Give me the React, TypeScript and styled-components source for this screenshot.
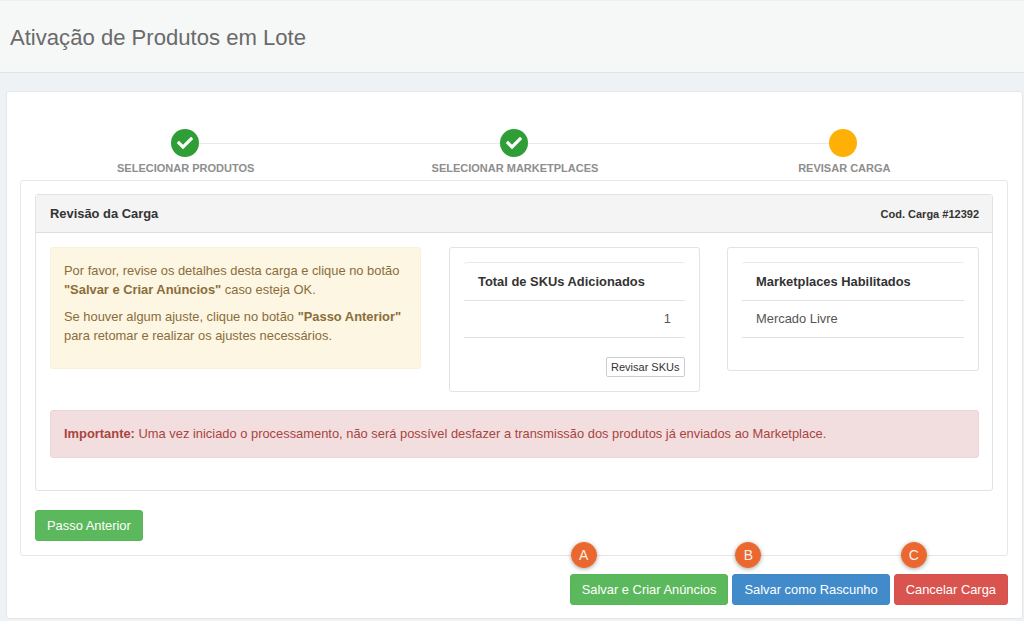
import React from 'react';
import styled, { createGlobalStyle } from 'styled-components';
import { FaCheck } from 'react-icons/fa';

const GlobalStyle = createGlobalStyle`
  html, body {
    margin: 0;
    padding: 0;
    background: #eef2f4;
    font-family: "Liberation Sans", Arial, sans-serif;
    font-size: 13px;
    color: #676a6c;
  }
  * {
    box-sizing: border-box;
  }
`;

const PageHeader = styled.header`
  height: 73px;
  background: #f6f8f8;
  border-top: 1px solid #eef1f1;
  border-bottom: 1px solid #dfe5e8;
  padding: 3px 10px 0;
  display: flex;
  align-items: center;
`;

const PageTitle = styled.h1`
  margin: 0;
  font-size: 22.1px;
  font-weight: 400;
  color: #6a6a6a;
`;

const Main = styled.main`
  padding: 18px 1px 0 6px;
`;

const Card = styled.section`
  height: 528px;
  background: #fff;
  border: 1px solid #e4e7e9;
  border-radius: 3px;
  padding: 37px 14px 14px 13px;
`;

const Stepper = styled.ol`
  list-style: none;
  margin: 0;
  padding: 0;
  height: 51px;
  display: grid;
  grid-template-columns: repeat(3, 1fr);
`;

const Step = styled.li<{ $first?: boolean; $last?: boolean }>`
  position: relative;
  display: flex;
  flex-direction: column;
  align-items: center;

  &::before {
    content: '';
    position: absolute;
    top: 14px;
    height: 1px;
    left: ${props => (props.$first ? '50%' : '0')};
    right: ${props => (props.$last ? '50%' : '0')};
    background: #e9e9e9;
  }
`;

const StepDot = styled.span<{ $color: string }>`
  position: relative;
  width: 28px;
  height: 28px;
  border-radius: 50%;
  background: ${props => props.$color};
  color: #fff;
  display: flex;
  align-items: center;
  justify-content: center;
`;

const StepLabel = styled.span`
  margin-top: 4px;
  padding-left: 2px;
  font-size: 11px;
  line-height: 14px;
  font-weight: 700;
  color: #8e8e8e;
  text-transform: uppercase;
`;

const StepPanel = styled.div`
  height: 376px;
  border: 1px solid #e6e6e6;
  border-radius: 3px;
  padding: 13px 14px 0;
`;

const ReviewPanel = styled.div`
  height: 297px;
  border: 1px solid #e3e3e3;
  border-radius: 3px;
`;

const ReviewHeader = styled.div`
  height: 38px;
  background: #f4f4f4;
  border-bottom: 1px solid #ddd;
  padding: 0 13px 0 14px;
  display: flex;
  align-items: center;
  justify-content: space-between;
`;

const ReviewTitle = styled.h3`
  margin: 0;
  font-size: 12.9px;
  font-weight: 700;
  color: #333;
`;

const LoadCode = styled.span`
  font-size: 11px;
  font-weight: 700;
  color: #333;
`;

const ReviewBody = styled.div`
  padding: 14px 13px 0 14px;
`;

const Columns = styled.div`
  display: grid;
  grid-template-columns: 372px 251px 252px;
  justify-content: space-between;
  align-items: start;
  height: 163px;
`;

const Alert = styled.div<{ $tone: 'warning' | 'danger' }>`
  border-radius: 3px;
  border: 1px solid ${props => (props.$tone === 'warning' ? '#faf0d8' : '#ecd5d8')};
  background: ${props => (props.$tone === 'warning' ? '#fcf6e2' : '#f2dede')};
  color: ${props => (props.$tone === 'warning' ? '#8a6d3b' : '#a94442')};
  font-size: 12.9px;
  line-height: 18.5px;
`;

const NoticeAlert = styled(Alert)`
  width: 371px;
  height: 122px;
  padding: 14px 13px;
`;

const WideAlert = styled(Alert)`
  height: 48px;
  padding: 0 13px;
  display: flex;
  align-items: center;
`;

const AlertParagraph = styled.p`
  margin: 0 0 9px;
`;

const InnerCard = styled.div<{ $bottom: number }>`
  border: 1px solid #e3e3e3;
  border-radius: 3px;
  padding: 14px 14px ${props => props.$bottom}px;
`;

const MiniTable = styled.div`
  border-top: 1px solid #e9e9e9;
  border-radius: 3px 3px 0 0;
`;

const MiniHeading = styled.div`
  height: 38px;
  padding: 0 14px;
  display: flex;
  align-items: center;
  font-size: 12.9px;
  font-weight: 700;
  color: #333;
  border-bottom: 1px solid #e3e3e3;
`;

const MiniCell = styled.div<{ $right?: boolean }>`
  height: 37px;
  padding: 0 14px 2px;
  display: flex;
  align-items: center;
  justify-content: ${props => (props.$right ? 'flex-end' : 'flex-start')};
  font-size: 12.9px;
  color: #555;
  border-bottom: 1px solid #e3e3e3;
`;

const ReviseRow = styled.div`
  display: flex;
  justify-content: flex-end;
  margin-top: 19px;
`;

const ReviseButton = styled.button`
  height: 20px;
  padding: 0 4.5px;
  border: 1px solid #ccc;
  border-radius: 2px;
  background: #fff;
  font-family: inherit;
  font-size: 11px;
  color: #333;
`;

const ActionButton = styled.button<{ $color: string; $edge: string }>`
  height: 31px;
  padding: 0 11px;
  border: 1px solid ${props => props.$edge};
  border-radius: 3px;
  background: ${props => props.$color};
  color: #fff;
  font-family: inherit;
  font-size: 12.9px;
  white-space: nowrap;
`;

const BackRow = styled.div`
  margin-top: 19px;
`;

const Footer = styled.div`
  margin-top: 18px;
  display: flex;
  justify-content: flex-end;
  gap: 4px;
`;

const ButtonSlot = styled.div`
  position: relative;
`;

const Marker = styled.span<{ $left: number }>`
  position: absolute;
  top: -32px;
  left: ${props => props.$left}px;
  width: 26px;
  height: 26px;
  border-radius: 50%;
  background: #ea6830;
  border: 1px solid #f06a28;
  box-shadow: 0 1px 4px rgba(0, 0, 0, 0.35);
  color: #fdeee6;
  font-size: 14px;
  display: flex;
  align-items: center;
  justify-content: center;
`;

const steps = [
  { label: 'Selecionar Produtos', color: '#2f9e36', done: true },
  { label: 'Selecionar Marketplaces', color: '#2f9e36', done: true },
  { label: 'Revisar Carga', color: '#ffb007', done: false },
];

const actions = [
  { label: 'Salvar e Criar Anúncios', color: '#5cb85c', edge: '#58b658', marker: 'A', left: 1 },
  { label: 'Salvar como Rascunho', color: '#428bca', edge: '#4288c6', marker: 'B', left: 3 },
  { label: 'Cancelar Carga', color: '#d9534f', edge: '#d6504c', marker: 'C', left: 7 },
];

const App: React.FC = () => (
  <>
    <GlobalStyle />
    <PageHeader>
      <PageTitle>Ativação de Produtos em Lote</PageTitle>
    </PageHeader>
    <Main>
      <Card>
        <Stepper>
          {steps.map((step, index) => (
            <Step key={step.label} $first={index === 0} $last={index === steps.length - 1}>
              <StepDot $color={step.color}>{step.done && <FaCheck size={16} />}</StepDot>
              <StepLabel>{step.label}</StepLabel>
            </Step>
          ))}
        </Stepper>
        <StepPanel>
          <ReviewPanel>
            <ReviewHeader>
              <ReviewTitle>Revisão da Carga</ReviewTitle>
              <LoadCode>Cod. Carga #12392</LoadCode>
            </ReviewHeader>
            <ReviewBody>
              <Columns>
                <NoticeAlert $tone="warning">
                  <AlertParagraph>
                    Por favor, revise os detalhes desta carga e clique no botão{' '}
                    <strong>"Salvar e Criar Anúncios"</strong> caso esteja OK.
                  </AlertParagraph>
                  <AlertParagraph>
                    Se houver algum ajuste, clique no botão <strong>"Passo Anterior"</strong> para
                    retomar e realizar os ajustes necessários.
                  </AlertParagraph>
                </NoticeAlert>
                <InnerCard $bottom={14}>
                  <MiniTable>
                    <MiniHeading>Total de SKUs Adicionados</MiniHeading>
                    <MiniCell $right>1</MiniCell>
                  </MiniTable>
                  <ReviseRow>
                    <ReviseButton>Revisar SKUs</ReviseButton>
                  </ReviseRow>
                </InnerCard>
                <InnerCard $bottom={32}>
                  <MiniTable>
                    <MiniHeading>Marketplaces Habilitados</MiniHeading>
                    <MiniCell>Mercado Livre</MiniCell>
                  </MiniTable>
                </InnerCard>
              </Columns>
              <WideAlert $tone="danger">
                <span>
                  <strong>Importante:</strong> Uma vez iniciado o processamento, não será possível
                  desfazer a transmissão dos produtos já enviados ao Marketplace.
                </span>
              </WideAlert>
            </ReviewBody>
          </ReviewPanel>
          <BackRow>
            <ActionButton $color="#5cb85c" $edge="#58b658">Passo Anterior</ActionButton>
          </BackRow>
        </StepPanel>
        <Footer>
          {actions.map(action => (
            <ButtonSlot key={action.marker}>
              <Marker $left={action.left}>{action.marker}</Marker>
              <ActionButton $color={action.color} $edge={action.edge}>{action.label}</ActionButton>
            </ButtonSlot>
          ))}
        </Footer>
      </Card>
    </Main>
  </>
);

export default App;
